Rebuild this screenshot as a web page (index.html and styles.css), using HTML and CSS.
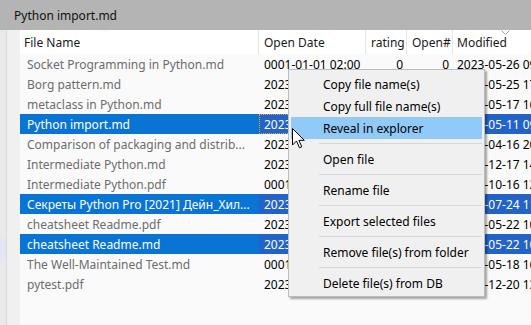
FILE: index.html
```html
<!DOCTYPE html>
<html>
<head>
<meta charset="utf-8">
<link rel="stylesheet" href="styles.css">
</head>
<body>
<div class="title">Python import.md</div>
<div class="main">
  <div class="side"><div class="side-a"><div class="side-mark"></div></div><div class="side-b"></div></div>
  <div class="list">
    <div class="header">
      <div class="hc c-name">File Name</div>
      <div class="hc c-date">Open Date</div>
      <div class="hc c-rate">rating</div>
      <div class="hc c-open">Open#</div>
      <div class="hc c-mod">Modified</div>
    </div>
    <div class="row"><div class="c c-name">Socket Programming in Python.md</div><div class="c c-date">0001-01-01 02:00</div><div class="c c-rate num">0</div><div class="c c-open num">0</div><div class="c c-mod">2023-05-26 09:14</div></div>
    <div class="row"><div class="c c-name">Borg pattern.md</div><div class="c c-date">2023-05-25 18:02</div><div class="c c-rate num">0</div><div class="c c-open num">1</div><div class="c c-mod">2023-05-25 17:40</div></div>
    <div class="row"><div class="c c-name">metaclass in Python.md</div><div class="c c-date">2023-05-24 11:30</div><div class="c c-rate num">0</div><div class="c c-open num">2</div><div class="c c-mod">2023-05-17 16:21</div></div>
    <div class="row sel"><div class="c c-name">Python import.md</div><div class="c c-date focus">2023-05-26 10:05</div><div class="c c-rate num">0</div><div class="c c-open num">3</div><div class="c c-mod">2023-05-11 09:12</div></div>
    <div class="row"><div class="c c-name">Comparison of packaging and distrib...</div><div class="c c-date">2023-05-20 13:48</div><div class="c c-rate num">0</div><div class="c c-open num">1</div><div class="c c-mod">2023-04-16 20:33</div></div>
    <div class="row"><div class="c c-name">Intermediate Python.md</div><div class="c c-date">2023-05-19 15:10</div><div class="c c-rate num">0</div><div class="c c-open num">1</div><div class="c c-mod">2022-12-17 14:55</div></div>
    <div class="row"><div class="c c-name">Intermediate Python.pdf</div><div class="c c-date">0001-01-01 02:00</div><div class="c c-rate num">0</div><div class="c c-open num">0</div><div class="c c-mod">2022-10-16 12:08</div></div>
    <div class="row sel"><div class="c c-name">Секреты Python Pro [2021] Дейн_Хил...</div><div class="c c-date">2023-05-18 19:27</div><div class="c c-rate num">0</div><div class="c c-open num">2</div><div class="c c-mod">2022-07-24 11:42</div></div>
    <div class="row"><div class="c c-name">cheatsheet Readme.pdf</div><div class="c c-date">2023-05-22 10:16</div><div class="c c-rate num">0</div><div class="c c-open num">1</div><div class="c c-mod">2023-05-22 10:15</div></div>
    <div class="row sel"><div class="c c-name">cheatsheet Readme.md</div><div class="c c-date">2023-05-22 10:18</div><div class="c c-rate num">0</div><div class="c c-open num">1</div><div class="c c-mod">2023-05-22 10:17</div></div>
    <div class="row"><div class="c c-name">The Well-Maintained Test.md</div><div class="c c-date">0001-01-01 02:00</div><div class="c c-rate num">0</div><div class="c c-open num">0</div><div class="c c-mod">2023-05-18 16:44</div></div>
    <div class="row"><div class="c c-name">pytest.pdf</div><div class="c c-date">2023-05-15 08:50</div><div class="c c-rate num">0</div><div class="c c-open num">1</div><div class="c c-mod">2022-12-20 13:01</div></div>
  </div>
</div>

<svg class="caret" width="9" height="5" viewBox="0 0 9 5"><polyline points="0.5,0.5 4.5,4.5 8.5,0.5" fill="none" stroke="#a0a0a0" stroke-width="1"/></svg>

<div class="menu">
  <div class="mi">Copy file name(s)</div>
  <div class="mi">Copy full file name(s)</div>
  <div class="mi hot">Reveal in explorer</div>
  <div class="sep"></div>
  <div class="mi">Open file</div>
  <div class="sep"></div>
  <div class="mi">Rename file</div>
  <div class="sep"></div>
  <div class="mi">Export selected files</div>
  <div class="sep"></div>
  <div class="mi">Remove file(s) from folder</div>
  <div class="sep"></div>
  <div class="mi">Delete file(s) from DB</div>
</div>

<svg class="cursor" width="13" height="21" viewBox="0 0 13 21"><path d="M0.5 0.5 L0.5 17 L4.5 13 L7.5 19.8 L9.8 18.8 L6.9 12.3 L12.3 12.3 Z" fill="#fff" stroke="#000" stroke-width="1" stroke-linejoin="miter"/></svg>
</body>
</html>
```

FILE: styles.css
```css
html, body {
  margin: 0;
  padding: 0;
}
body {
  width: 531px;
  height: 325px;
  overflow: hidden;
  position: relative;
  font-family: "Noto Sans", "Open Sans", sans-serif;
  font-size: 12px;
  background: #f9f9f9;
}
.title {
  height: 30px;
  background: #b4b4b4;
  color: #111;
  display: flex;
  align-items: center;
  padding-left: 14px;
  box-sizing: border-box;
}
.main {
  display: flex;
  height: 295px;
}
.side {
  width: 20px;
  flex: none;
  display: flex;
}
.side-a {
  width: 6px;
  background: #e9e9e9;
  border-right: 1px solid #d9d9d9;
  position: relative;
}
.side-mark {
  margin-top: 208px;
  height: 22px;
  background: #e3e7f3;
}
.side-b {
  flex: 1;
  background: #f0f0f0;
}
.list {
  flex: 1;
  background: #fafafa;
  overflow: hidden;
}
.header {
  display: flex;
  height: 24px;
  background: #fff;
  white-space: nowrap;
}
.hc {
  box-sizing: border-box;
  border-right: 1px solid #e5e5e5;
  display: flex;
  align-items: center;
  color: #1a1a1a;
  flex: none;
}
.header .c-name { padding-left: 4px; }
.header .c-date { padding-left: 5px; }
.header .c-rate { padding-left: 5px; }
.header .c-open { padding-left: 5px; }
.header .c-mod { padding-left: 4px; border-right: none; }
.c-name { width: 239px; }
.c-date { width: 107px; }
.c-rate { width: 41px; }
.c-open { width: 46px; }
.c-mod { width: 160px; }
.row {
  display: flex;
  height: 20px;
  white-space: nowrap;
}
.c {
  flex: none;
  box-sizing: border-box;
  display: flex;
  align-items: center;
  overflow: hidden;
  color: #000;
}
.row .c-name {
  padding-left: 7px;
  color: #6d6d6d;
}
.row .c-date { padding-left: 5px; }
.row .c-mod { padding-left: 4px; }
.num {
  justify-content: flex-end;
  padding-right: 4px;
}
.row.sel .c {
  background: #2362c6;
  color: #fff;
}
.row.sel .c-name {
  background: #0a74d5;
  color: #fff;
}
.focus {
  border: 1px dotted #f2a43a;
  padding-left: 4px !important;
}
.caret {
  position: absolute;
  left: 501px;
  top: 30px;
}
.menu {
  position: absolute;
  left: 288px;
  top: 69px;
  width: 197px;
  box-sizing: border-box;
  background: #f0f0f0;
  border: 1px solid #bdbdbd;
  box-shadow: 2px 2px 2px rgba(0, 0, 0, 0.35);
  padding: 3px 0 2px;
  color: #000;
}
.mi {
  height: 22px;
  margin: 0 2px;
  padding-left: 32px;
  display: flex;
  align-items: center;
  white-space: nowrap;
}
.mi.hot {
  background: #91c9f7;
}
.sep {
  height: 9px;
  margin-left: 30px;
  margin-right: 2px;
  display: flex;
  align-items: center;
}
.sep::before {
  content: "";
  display: block;
  width: 100%;
  height: 1px;
  background: #d7d7d7;
}
.cursor {
  position: absolute;
  left: 292px;
  top: 128px;
}
```
